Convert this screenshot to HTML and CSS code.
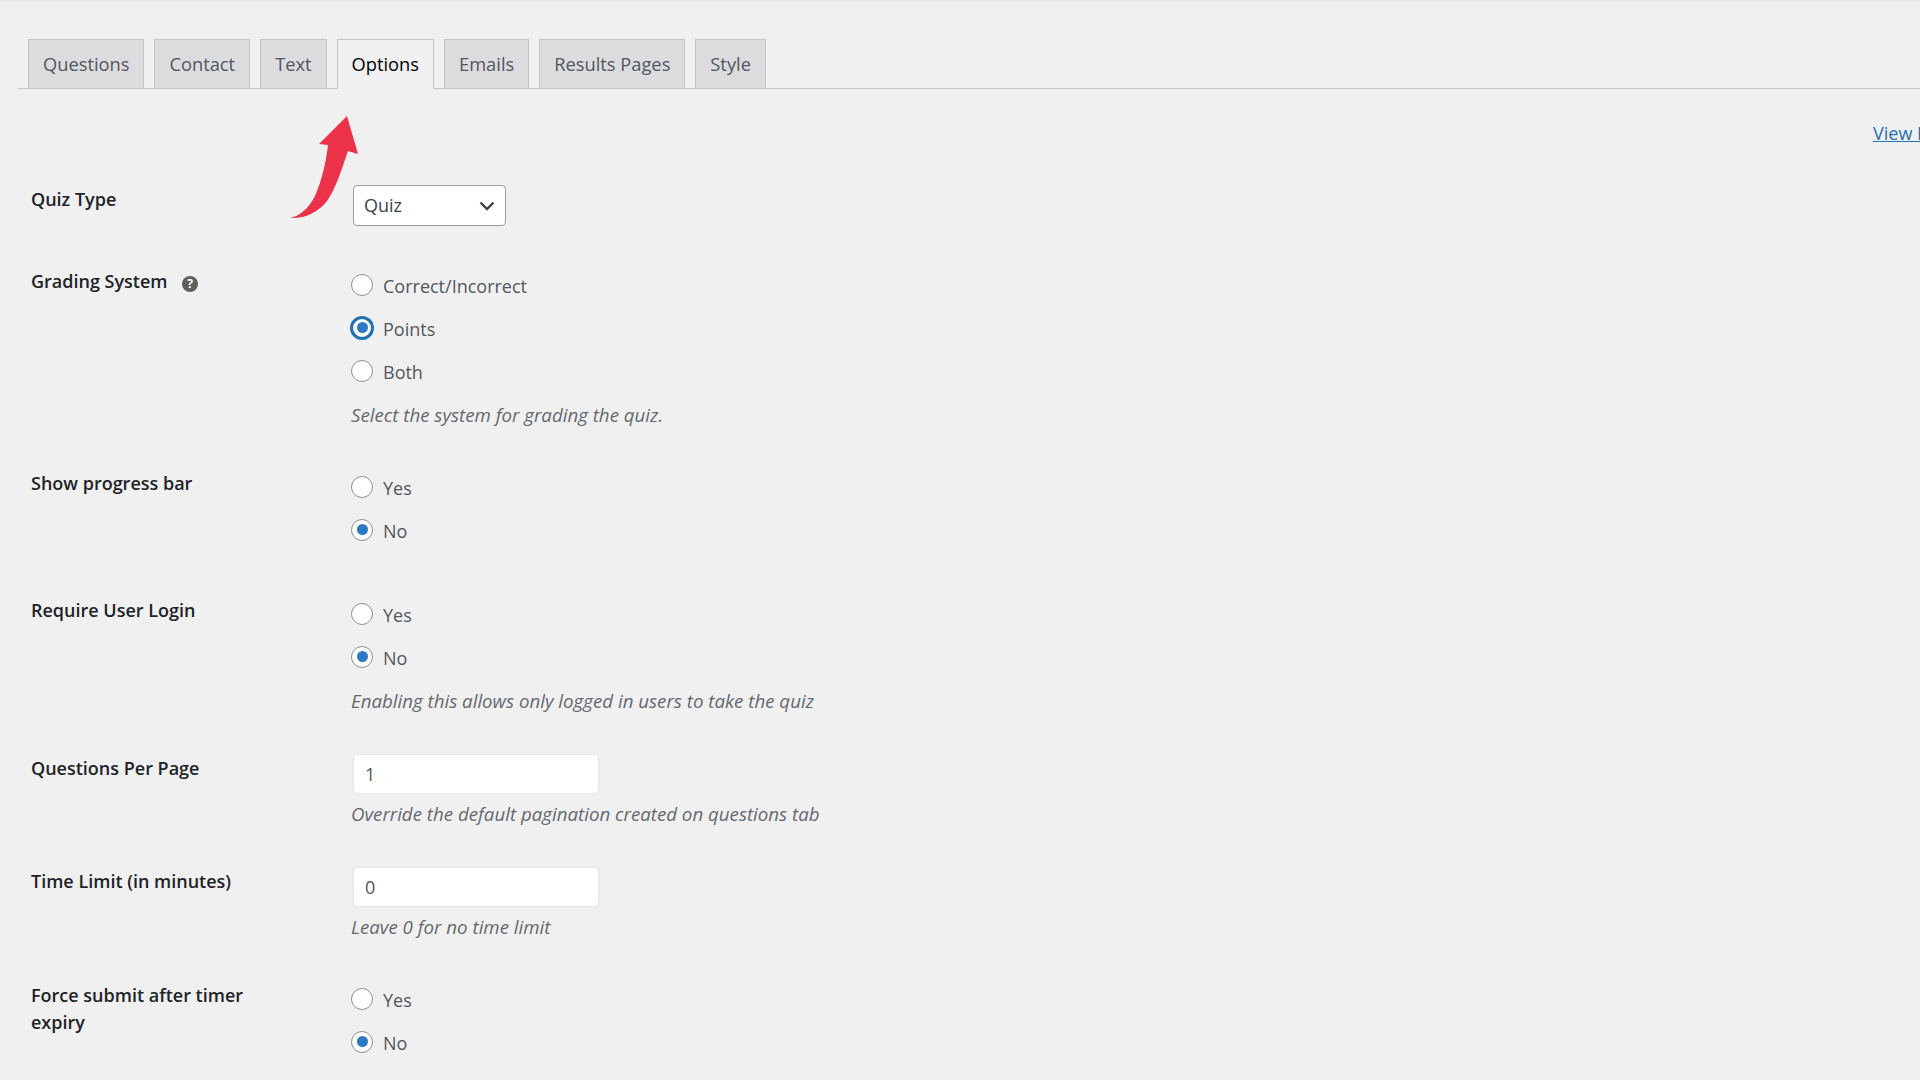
FILE: index.html
```html
<!DOCTYPE html>
<html lang="en">
<head>
<meta charset="utf-8">
<title>Quiz Options</title>
<link rel="stylesheet" href="styles.css">
</head>
<body>
<nav class="tabs">
  <a class="tab">Questions</a>
  <a class="tab">Contact</a>
  <a class="tab">Text</a>
  <a class="tab tab-active">Options</a>
  <a class="tab">Emails</a>
  <a class="tab">Results Pages</a>
  <a class="tab">Style</a>
</nav>
<div class="link-row"><a class="view-link">View Documentation</a></div>
<svg class="arrow" viewBox="0 0 70 106" width="70" height="106" aria-hidden="true">
  <path d="M56 0 L67 38 L57 35 C50 55 45 72 36 85 C27 97 12 103 -1 102 C9 100 18 92 24 80 C31 64 35 46 37 29 L28 28 Z" fill="#ec3249"/>
</svg>
<form class="form">
  <div class="row row-select">
    <div class="label">Quiz Type</div>
    <div class="control">
      <div class="select-wrap">
        <select class="select"><option>Quiz</option></select>
        <svg class="chevron" viewBox="0 0 16 10" width="16" height="10" aria-hidden="true"><path d="M1.5 1.5 L8 8 L14.5 1.5" fill="none" stroke="#3c434a" stroke-width="2.4"/></svg>
      </div>
    </div>
  </div>
  <div class="row row-grading">
    <div class="label">Grading System <span class="help">?</span></div>
    <div class="control">
      <label class="radio"><input type="radio" name="g"><span>Correct/Incorrect</span></label>
      <label class="radio"><input type="radio" name="g" class="focus" checked><span>Points</span></label>
      <label class="radio"><input type="radio" name="g"><span>Both</span></label>
      <p class="desc">Select the system for grading the quiz.</p>
    </div>
  </div>
  <div class="row">
    <div class="label">Show progress bar</div>
    <div class="control">
      <label class="radio"><input type="radio" name="p"><span>Yes</span></label>
      <label class="radio"><input type="radio" name="p" checked><span>No</span></label>
    </div>
  </div>
  <div class="row row-login">
    <div class="label">Require User Login</div>
    <div class="control">
      <label class="radio"><input type="radio" name="l"><span>Yes</span></label>
      <label class="radio"><input type="radio" name="l" checked><span>No</span></label>
      <p class="desc">Enabling this allows only logged in users to take the quiz</p>
    </div>
  </div>
  <div class="row row-input row-per-page">
    <div class="label">Questions Per Page</div>
    <div class="control">
      <input class="text" type="text" value="1">
      <p class="desc desc-tight">Override the default pagination created on questions tab</p>
    </div>
  </div>
  <div class="row row-input row-time">
    <div class="label">Time Limit (in minutes)</div>
    <div class="control">
      <input class="text" type="text" value="0">
      <p class="desc desc-tight">Leave 0 for no time limit</p>
    </div>
  </div>
  <div class="row">
    <div class="label">Force submit after timer expiry</div>
    <div class="control">
      <label class="radio"><input type="radio" name="f"><span>Yes</span></label>
      <label class="radio"><input type="radio" name="f" checked><span>No</span></label>
    </div>
  </div>
</form>
</body>
</html>
```
FILE: styles.css
```css
* { box-sizing: border-box; }
html, body { height: 100%; }
body {
  margin: 0;
  height: 1080px;
  overflow: hidden;
  position: relative;
  background: #f0f0f1;
  border-top: 2px solid #e8e8e9;
  font-family: "Open Sans", "Liberation Sans", sans-serif;
  font-size: 18px;
  color: #1d2327;
}
.tabs {
  display: flex;
  gap: 10px;
  margin: 37px 0 0 18px;
  padding-left: 10px;
  height: 50px;
  border-bottom: 1px solid #c3c4c7;
}
.tab {
  height: 50px;
  padding: 0 14px 1px;
  display: flex;
  align-items: center;
  background: #dcdcde;
  border: 1px solid #c3c4c7;
  color: #50575e;
  font-size: 18.3px;
  font-weight: 500;
}
.tab-active {
  background: #f0f0f1;
  border-bottom-color: #f0f0f1;
  color: #000;
}
.link-row {
  margin-top: 32px;
  padding-left: 1873px;
  height: 24px;
  line-height: 24px;
  white-space: nowrap;
}
.view-link { color: #2271b1; text-decoration: underline; }
.arrow { position: absolute; left: 291px; top: 114px; overflow: visible; }
.form { margin-top: 40px; padding-left: 31px; }
.row {
  display: grid;
  grid-template-columns: 320px 600px;
  padding-bottom: 41px;
}
.row-select { padding-bottom: 38px; }
.row-grading { padding-bottom: 29px; }
.row-login { padding-bottom: 31px; }
.row-per-page { padding-bottom: 33px; }
.row-time { padding-bottom: 31px; }
.label {
  width: 240px;
  padding-top: 4px;
  line-height: 27px;
  font-size: 18px;
  font-weight: 550;
}
.row-input .label, .row-select .label { padding-top: 1px; }
.help {
  display: inline-flex;
  align-items: center;
  justify-content: center;
  width: 16px;
  height: 16px;
  margin-left: 10px;
  border-radius: 50%;
  background: #5f5f5f;
  color: #fff;
  font-size: 12px;
  font-weight: 700;
  line-height: 1;
  vertical-align: 0;
}
.radio {
  display: flex;
  align-items: center;
  height: 43px;
  color: #50575e;
}
.radio input {
  appearance: none;
  width: 22px;
  height: 22px;
  margin: -2px 10px 0 0;
  flex: none;
  border: 1px solid #8c8f94;
  border-radius: 50%;
  background: #fff;
  display: grid;
  place-items: center;
}
.radio input:checked::before {
  content: "";
  width: 11px;
  height: 11px;
  border-radius: 50%;
  background: #2c7ac4;
}
.radio input.focus {
  border: 2px solid #2271b1;
  box-shadow: 0 0 0 1px #2271b1;
}
.desc {
  margin: 0;
  height: 44px;
  line-height: 44px;
  font-size: 18.7px;
  font-style: italic;
  color: #646970;
  white-space: nowrap;
}
.desc-tight { height: 40px; line-height: 40px; }
.select-wrap { position: relative; width: 153px; height: 41px; margin-left: 2px; }
.select {
  appearance: none;
  width: 100%;
  height: 100%;
  padding: 0 10px 2px;
  background: #fff;
  border: 1px solid #9a9da1;
  border-radius: 4px;
  color: #3c434a;
  font: inherit;
}
.chevron { position: absolute; right: 11px; top: 16px; pointer-events: none; }
.text {
  display: block;
  width: 246px;
  height: 40px;
  margin-left: 2px;
  padding: 0 11px;
  background: #fff;
  border: 1px solid #e6e6e6;
  border-radius: 4px;
  color: #50575e;
  font: inherit;
}
```
